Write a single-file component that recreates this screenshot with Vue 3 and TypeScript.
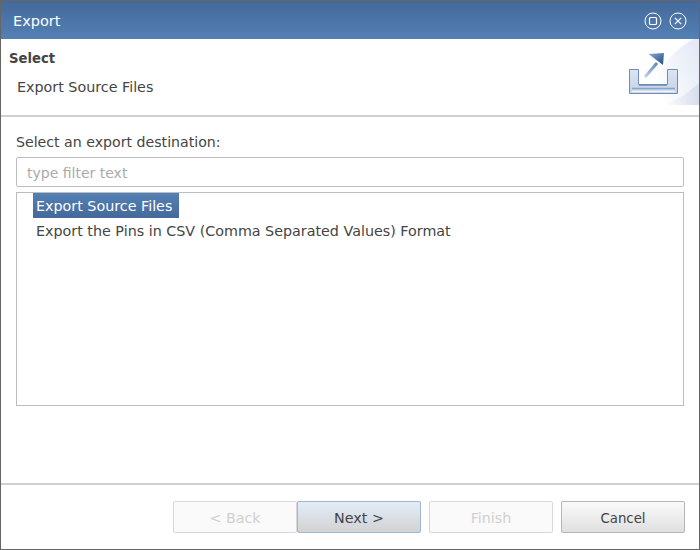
<script setup lang="ts">
const items: string[] = [
  'Export Source Files',
  'Export the Pins in CSV (Comma Separated Values) Format',
];
const buttons = [
  { label: '< Back', kind: 'disabled' },
  { label: 'Next >', kind: 'primary' },
  { label: 'Finish', kind: 'disabled gap' },
  { label: 'Cancel', kind: 'normal gap' },
];
</script>

<template>
  <div class="dialog">
    <header class="titlebar">
      <span class="title">Export</span>
      <div class="controls">
        <svg width="18" height="18" viewBox="0 0 18 18">
          <circle cx="9" cy="9" r="8" fill="none" stroke="#fff" stroke-width="1" />
          <rect x="5.5" y="5.5" width="7" height="7" rx="1" fill="none" stroke="#fff" stroke-width="1.2" />
        </svg>
        <svg width="18" height="18" viewBox="0 0 18 18">
          <circle cx="9" cy="9" r="8" fill="none" stroke="#fff" stroke-width="1" />
          <path d="M5.800 5.800l6.400 6.400M12.200 5.800l-6.400 6.400" fill="none" stroke="#fff" stroke-width="1.2" />
        </svg>
      </div>
    </header>

    <section class="banner">
      <div class="banner-text">
        <div class="banner-title">Select</div>
        <div class="banner-sub">Export Source Files</div>
      </div>
      <div class="banner-art">
        <svg width="75" height="66" viewBox="0 0 75 66">
          <defs>
            <linearGradient id="swoosh" x1="0" y1="0.7" x2="1" y2="0.2">
              <stop offset="0.2" stop-color="#ffffff" />
              <stop offset="1" stop-color="#e3e9f5" />
            </linearGradient>
            <linearGradient id="shadow" x1="0" y1="0" x2="1" y2="0">
              <stop offset="0" stop-color="#e6ebf5" stop-opacity="0" />
              <stop offset="1" stop-color="#d6deed" />
            </linearGradient>
            <linearGradient id="tray" x1="0" y1="0" x2="0" y2="1">
              <stop offset="0" stop-color="#dbe5f2" />
              <stop offset="1" stop-color="#c4d3e7" />
            </linearGradient>
            <linearGradient id="shaft" x1="0" y1="1" x2="1" y2="0">
              <stop offset="0" stop-color="#c3d3e8" />
              <stop offset="1" stop-color="#5f87bb" />
            </linearGradient>
            <linearGradient id="head" x1="0" y1="0" x2="1" y2="1">
              <stop offset="0" stop-color="#8fabd0" />
              <stop offset="1" stop-color="#1f4a86" />
            </linearGradient>
          </defs>
          <path d="M75 0 H70 C58 6 48 14 38 30 L16 66 H75Z" fill="url(#swoosh)" />
          <path d="M40 66 C52 62 64 54 75 44 V66Z" fill="url(#shadow)" />
          <path d="M5.500 30.500h9v15h29v-15h10v24h-48z" fill="url(#tray)" stroke="#6d8db8" stroke-width="1" />
          <path d="M15 46.500h28" stroke="#7f9bc2" stroke-width="1" />
          <path d="M8 49.500h43" stroke="#8aa4c7" stroke-width="1.500" />
          <path d="M8 52.500h43" stroke="#eef3fa" stroke-width="1.500" />
          <path d="M21 38 L33 24" stroke="url(#shaft)" stroke-width="3" fill="none" />
          <path d="M24.500 15 L40 14 L39 26z" fill="url(#head)" />
        </svg>
      </div>
    </section>

    <main class="body">
      <label class="prompt">Select an export destination:</label>
      <input class="filter" placeholder="type filter text" />
      <ul class="list">
        <li v-for="(item, i) in items" :key="item" :class="['row', { selected: i === 0 }]">{{ item }}</li>
      </ul>
    </main>

    <footer class="footer">
      <button
        v-for="b in buttons"
        :key="b.label"
        :class="['btn', b.kind]"
        :disabled="b.kind.includes('disabled')"
      >{{ b.label }}</button>
    </footer>
  </div>
</template>

<style>
html, body { margin: 0; padding: 0; background: #fff; }
</style>

<style scoped>
.dialog {
  width: 700px;
  height: 550px;
  box-sizing: border-box;
  display: flex;
  flex-direction: column;
  border: 1px solid #666;
  background: #fff;
  font-family: "DejaVu Sans", sans-serif;
  font-size: 14.3px;
  color: #444;
}
.titlebar {
  height: 38px;
  flex: none;
  box-sizing: border-box;
  display: flex;
  align-items: center;
  justify-content: space-between;
  padding: 1px 12px 0;
  background: linear-gradient(#44699a, #5480b5);
}
.title { color: #fff; font-size: 14.5px; }
.controls { display: flex; gap: 7px; }
.controls svg { display: block; }
.banner {
  height: 78px;
  flex: none;
  display: flex;
  justify-content: space-between;
  box-sizing: border-box;
  border-bottom: 2px solid #d0d0d0;
}
.banner-text { padding: 11px 8px; }
.banner-title { font-weight: 700; font-size: 13.2px; line-height: 17px; }
.banner-sub { margin-top: 12px; padding-left: 8px; }
.banner-art { height: 66px; }
.banner-art svg { display: block; }
.body {
  flex: 1;
  display: flex;
  flex-direction: column;
  padding: 17px 15px 0;
}
.prompt { line-height: 17px; font-size: 14.15px; }
.filter {
  margin-top: 6px;
  height: 30px;
  box-sizing: border-box;
  border: 1px solid #bdbdbd;
  border-radius: 2px;
  padding: 1px 10px 0;
  font: inherit;
  font-size: 14px;
  color: inherit;
  outline: none;
}
.filter::placeholder { color: #aaa; opacity: 1; }
.list {
  margin: 5px 0 0;
  height: 214px;
  box-sizing: border-box;
  border: 1px solid #bdbdbd;
  padding: 0 0 0 16px;
  list-style: none;
}
.row {
  width: fit-content;
  height: 25px;
  box-sizing: border-box;
  padding: 1px 7px 0 3px;
  line-height: 25px;
}
.row.selected {
  color: #fff;
  background: linear-gradient(#5480b5, #44699a);
}
.footer {
  height: 66px;
  flex: none;
  box-sizing: border-box;
  border-top: 2px solid #d0d0d0;
  display: flex;
  justify-content: flex-end;
  align-items: flex-start;
  padding: 16px 14px 0 0;
}
.btn {
  width: 124px;
  height: 32px;
  box-sizing: border-box;
  border-radius: 2px;
  font: inherit;
  color: #444;
  padding: 1px 0 0;
}
.btn.gap { margin-left: 8px; }
.btn.disabled {
  border: 1px solid #d8d8d8;
  background: #fafafa;
  color: #d0d0d0;
}
.btn.primary {
  border: 1px solid #9fb6d2;
  background: linear-gradient(#e2edf9, #d2d2d2);
}
.btn.normal {
  border: 1px solid #b5b5b5;
  background: linear-gradient(#fafafa, #e0e0e0);
  font-size: 13.3px;
  padding-top: 2px;
}
</style>
